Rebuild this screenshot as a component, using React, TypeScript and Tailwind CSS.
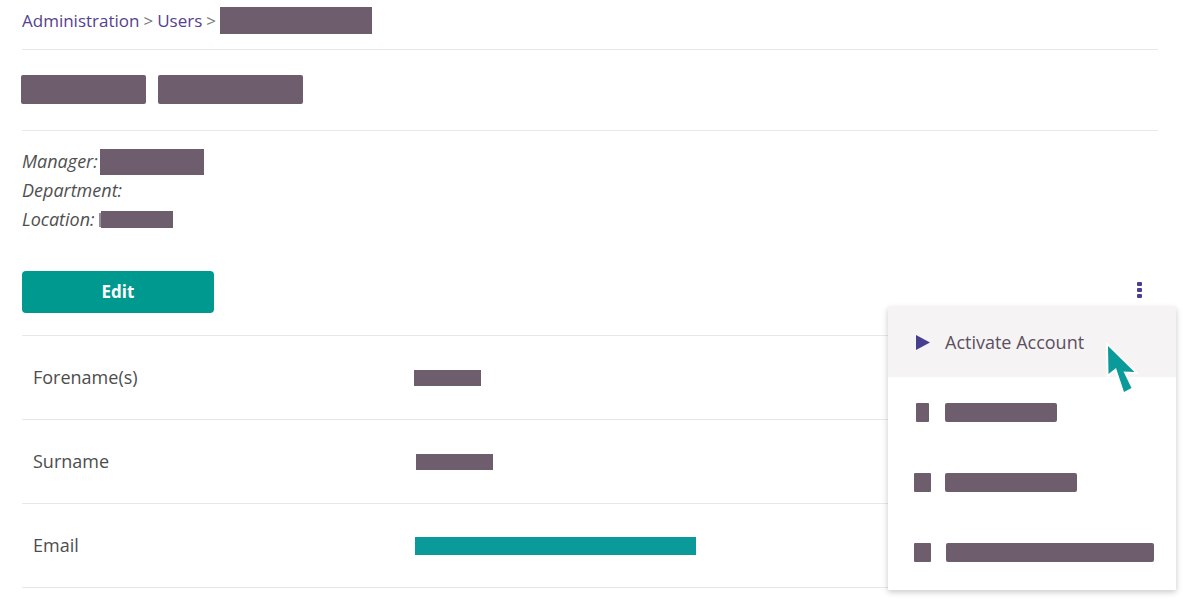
import React from "react";

const redact = "bg-[#6e5e6d]";

const arrow = "0,0 0.5,28 8,22 16,46 23.5,42 15.5,25.5 26.5,26";

function Cursor() {
  return (
    <svg width="40" height="56" viewBox="-4 -4 40 56" className="absolute left-[1104px] top-[342px] z-20 pointer-events-none">
      <polygon points={arrow} fill="#ffffff" stroke="#ffffff" strokeWidth="4" strokeLinejoin="miter" />
      <polygon points={arrow} fill="#0a9a9a" />
    </svg>
  );
}

function Kebab() {
  return (
    <button className="w-6 h-6 flex flex-col items-center justify-center gap-[2px] mr-[7px] mb-[4px]">
      <span className="block w-[5px] h-[4px] rounded-[1px] bg-[#4b3f91]" />
      <span className="block w-[5px] h-[4px] rounded-[1px] bg-[#4b3f91]" />
      <span className="block w-[5px] h-[4px] rounded-[1px] bg-[#4b3f91]" />
    </button>
  );
}

const menuItems = [
  { icon: "w-[13px] ml-[28px]", bar: "w-[112px] ml-[16px]" },
  { icon: "w-[17px] ml-[26px]", bar: "w-[132px] ml-[14px]" },
  { icon: "w-[17px] ml-[26px]", bar: "w-[208px] ml-[15px]" },
];

function Menu() {
  return (
    <div className="absolute right-[-18px] top-[36px] w-[288px] h-[283px] bg-white shadow-[0_2px_6px_rgba(0,0,0,0.22)] z-10">
      <div className="h-[70px] bg-[#f5f3f4] flex items-center">
        <svg width="14" height="15" viewBox="0 0 14 15" className="ml-[28px]">
          <polygon points="0,0 14,7.5 0,15" fill="#463f8f" />
        </svg>
        <span className="ml-[15px] text-[18px] text-[#5a5060]">Activate Account</span>
      </div>
      {menuItems.map((m, i) => (
        <div key={i} className="h-[70px] flex items-center">
          <span className={`block h-[19px] rounded-[1px] ${redact} ${m.icon}`} />
          <span className={`block h-[19px] rounded-[2px] ${redact} ${m.bar}`} />
        </div>
      ))}
    </div>
  );
}

const rows = [
  { label: "Forename(s)", bar: "w-[67px] h-[16px] ml-0", teal: false },
  { label: "Surname", bar: "w-[77px] h-[16px] ml-[2px]", teal: false },
  { label: "Email", bar: "w-[281px] h-[18px] ml-[1px]", teal: true },
];

export default function App() {
  return (
    <div className="relative w-[1186px] h-[606px] overflow-hidden bg-white font-['Open_Sans',sans-serif]">
      <div className="w-[1136px] ml-[22px]">
        <div className="h-[50px] border-b border-[#e8e8e8] pb-[8px] flex items-center text-[17px]">
          <span className="text-[#55418f]">Administration</span>
          <span className="text-[#777] mx-[4px]">&gt;</span>
          <span className="text-[#55418f]">Users</span>
          <span className="text-[#777] ml-[4px] mr-[4px]">&gt;</span>
          <span className={`block w-[152px] h-[27px] ${redact}`} />
        </div>

        <div className="pt-[25px] pb-[26px] border-b border-[#e8e8e8] flex gap-[12px]">
          <span className={`block w-[125px] h-[29px] rounded-[2px] -ml-px ${redact}`} />
          <span className={`block w-[145px] h-[29px] rounded-[2px] ${redact}`} />
        </div>

        <div className="pt-[16px] text-[18px] italic text-[#4f4f4f] leading-[29px]">
          <div className="flex items-center">
            Manager:<span className={`block w-[104px] h-[26px] ml-[2px] ${redact}`} />
          </div>
          <div>Department:</div>
          <div className="flex items-center">
            Location: <span className="block w-[2px] h-[14px] ml-[4px] bg-[#9a8c99]" />
            <span className={`block w-[72px] h-[17px] ${redact}`} />
          </div>
        </div>

        <div className="relative mt-[37px] flex items-center justify-between">
          <button className="w-[192px] h-[42px] rounded-[4px] bg-[#009990] text-white font-bold text-[17px]">Edit</button>
          <Kebab />
          <Menu />
        </div>

        <div className="mt-[22px] border-t border-[#e8e8e8]">
          {rows.map((r) => (
            <div key={r.label} className="h-[84px] border-b border-[#e8e8e8] flex items-center">
              <span className="w-[392px] pl-[11px] text-[18px] text-[#4d4d4d]">{r.label}</span>
              <span className={`block ${r.bar} ${r.teal ? "bg-[#0a9a9a]" : redact}`} />
            </div>
          ))}
        </div>
      </div>
      <Cursor />
    </div>
  );
}
